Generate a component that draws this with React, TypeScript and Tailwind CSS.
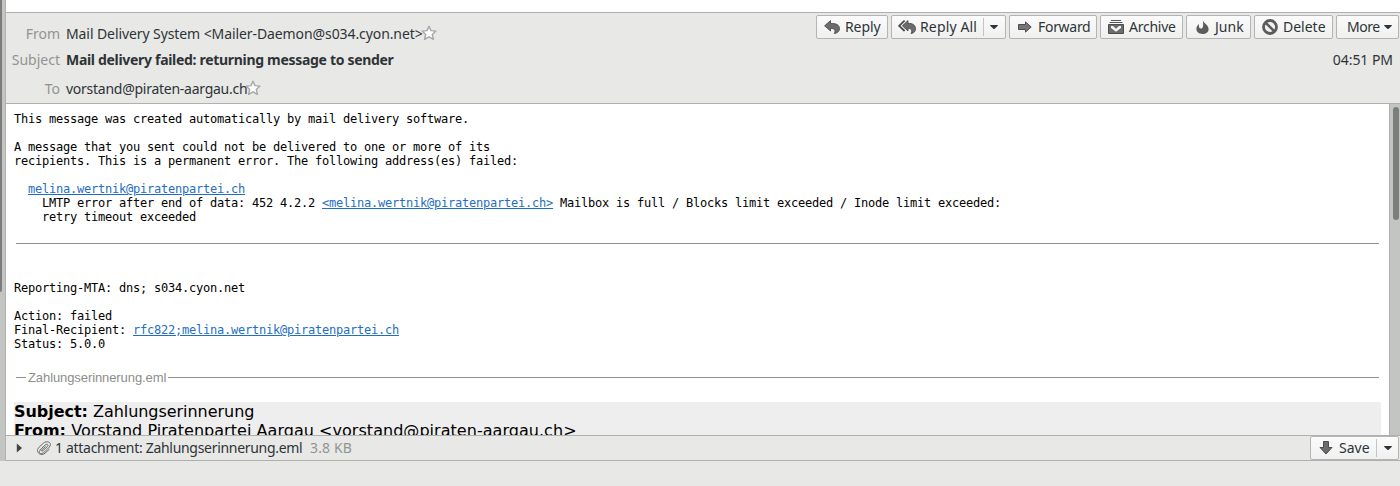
import type { ReactNode } from "react";

const ICON = "#5c5c5c";

function Star() {
  return (
    <svg width="16" height="16" viewBox="0 0 16 16" className="relative -top-px shrink-0">
      <path
        d="M8 1.2 L10 5.6 L14.9 6.1 L11.3 9.4 L12.4 14.4 L8 11.9 L3.6 14.4 L4.7 9.4 L1.1 6.1 L6 5.6 Z"
        fill="#fdfdfd"
        stroke="#a6a6a6"
        strokeWidth="1.4"
        strokeLinejoin="round"
      />
    </svg>
  );
}

function Caret() {
  return (
    <svg width="8" height="5" viewBox="0 0 8 5" className="shrink-0">
      <path d="M0.2 0 H7.8 V0.8 L4.4 4 H3.6 L0.2 0.8 Z" fill="#2e3436" />
    </svg>
  );
}

function ReplyIcon() {
  return (
    <svg width="16" height="16" viewBox="0 0 16 16" className="shrink-0">
      <path
        d="M0.6 6.8 L6.5 1.6 V4.5 C12 4.1 15.5 6.1 15.5 9.6 C15.5 12.3 13.3 14.2 10.2 14.5 C11.8 12.4 11.2 9.2 6.5 9.3 V12 Z"
        fill="#6c6c6c"
        stroke="#4c4c4c"
        strokeWidth="0.9"
      />
    </svg>
  );
}

function ReplyAllIcon() {
  return (
    <svg width="18" height="16" viewBox="0 0 18 16" className="shrink-0">
      <path d="M6.6 1.6 L1.2 6.8 L6.6 12" fill="none" stroke="#4c4c4c" strokeWidth="1.8" />
      <path
        d="M4.4 6.8 L10 1.6 V4.5 C14.5 4.1 17.5 6.1 17.5 9.6 C17.5 12.3 16 14.2 13 14.5 C14.4 12.4 14 9.2 10 9.3 V12 Z"
        fill="#6c6c6c"
        stroke="#4c4c4c"
        strokeWidth="0.9"
      />
    </svg>
  );
}

function ForwardIcon() {
  return (
    <svg width="14" height="12" viewBox="0 0 14 12" className="shrink-0">
      <path d="M0.5 3.5 H7.5 V0.9 L13.2 6 L7.5 11.1 V8.5 H0.5 Z" fill="#757575" stroke="#4c4c4c" strokeWidth="1" />
    </svg>
  );
}

function ArchiveIcon() {
  return (
    <svg width="16" height="16" viewBox="0 0 16 16" className="shrink-0">
      <path d="M3 1.5 H13 M1.5 3.5 H14.5" stroke="#555555" strokeWidth="1" />
      <path d="M0.5 5.5 H15.5 V14.5 H0.5 Z" fill="#6c6c6c" stroke="#4c4c4c" />
      <path d="M3 7 H5 L8 9.8 L11 7 H13 V9 L8 12.8 L3 9 Z" fill="#f3f3f3" />
    </svg>
  );
}

function JunkIcon() {
  return (
    <svg width="13" height="16" viewBox="0 0 13 16" className="shrink-0">
      <path
        d="M6.8 1 C7 4 12.6 5.8 12.6 10 C12.6 13.2 10 15 6.5 15 C3 15 0.4 13 0.4 9.8 C0.4 7.8 1.4 6.3 3 5 C2.7 7 2.9 9.2 4.6 9.6 C7.6 10 7.4 5.5 6.8 1 Z"
        fill={ICON}
      />
    </svg>
  );
}

function DeleteIcon() {
  return (
    <svg width="16" height="16" viewBox="0 0 16 16" className="shrink-0">
      <circle cx="8" cy="8" r="6.5" fill="#f1f1f1" stroke={ICON} strokeWidth="2.8" />
      <path d="M3.8 3.8 L12.2 12.2" stroke={ICON} strokeWidth="2.6" />
    </svg>
  );
}

function SaveIcon() {
  return (
    <svg width="14" height="14" viewBox="0 0 14 14" className="shrink-0">
      <path d="M4.5 0.5 H9.5 V6.5 H13 L7 13 L1 6.5 H4.5 Z" fill="#6c6c6c" stroke="#4c4c4c" />
    </svg>
  );
}

function ClipIcon() {
  return (
    <svg width="14" height="14" viewBox="0 0 14 14" className="shrink-0">
      <g fill="none" stroke="#686868" strokeWidth="1">
        <path d="M2 12.2 C-0.4 11 0.4 7.8 2.2 6 L6.6 2 C9.4 -0.4 14.6 0.8 13.2 4.6 C12.6 6.4 9 9.4 6.8 11.4 C4.6 13.4 2.2 12.8 2.4 10.6 C2.6 8.8 6.2 5.8 8 4.2 C10.2 2.2 12 3.8 10.4 5.6 L6 9.6 C4.8 10.6 4 9.8 4.8 8.8 L8.6 5.4" />
        <path d="M2 12.6 C3.6 14 6.2 13.8 8 12.2 L12.4 8.2" />
      </g>
    </svg>
  );
}

function Button({ className, children }: { className: string; children: ReactNode }) {
  return (
    <button
      className={
        "flex h-6 shrink-0 items-center whitespace-nowrap rounded-[2px] border border-[#b4b5b3] bg-linear-to-b from-[#fbfbfb] to-[#f0f0f0] text-left text-[#2e3436] " +
        className
      }
    >
      {children}
    </button>
  );
}

function Separator() {
  return <span className="h-[18px] w-px shrink-0 bg-[#c4c4c4]" />;
}

export default function App() {
  return (
    <div className="flex h-[486px] w-[1400px] flex-col overflow-hidden bg-[#e8e8e6] font-['Noto_Sans',sans-serif] text-[14px] leading-[20px] text-[#2e3436]">
      <div className="flex h-[461px] shrink-0">
        <div className="w-[6px] shrink-0 border-r border-[#b2b3b1] bg-[#c3c5c3]">
          <div className="h-[292px] w-[2px] rounded-br-[2px] bg-[#7b7c7b]" />
        </div>
        <div className="flex min-w-0 flex-1 flex-col border-b border-[#b0b1af]">
          <div className="h-3 shrink-0 bg-white" />
          <header className="flex h-[92px] shrink-0 justify-between border-y border-[#b0b1af] whitespace-nowrap">
            <div className="grid grid-cols-[54px_auto] grid-rows-[26px_26px_32px] gap-x-[6px] pt-[8px]">
              <span className="self-center text-right text-[#929492]">From</span>
              <span className="flex items-center">
                <span className="w-[355px] tracking-[-0.09px]">Mail Delivery System &lt;Mailer-Daemon@s034.cyon.net&gt;</span>
                <Star />
              </span>
              <span className="self-center text-right text-[#929492]">Subject</span>
              <span className="self-center font-bold tracking-[-0.31px]">Mail delivery failed: returning message to sender</span>
              <span className="self-center text-right text-[#929492]">To</span>
              <span className="flex items-center">
                <span className="w-[179px] tracking-[-0.26px]">vorstand@piraten-aargau.ch</span>
                <Star />
              </span>
            </div>
            <div className="flex flex-col items-end pr-px pt-[2px]">
              <div className="flex gap-[3px]">
                <Button className="w-[72px] gap-[5px] pl-[7px] tracking-[-0.1px]"><ReplyIcon />Reply</Button>
                <Button className="w-[115px] pl-[6px] tracking-[0.15px]">
                  <ReplyAllIcon />
                  <span className="ml-[4px] w-[63px]">Reply All</span>
                  <Separator />
                  <span className="ml-[6px]"><Caret /></span>
                </Button>
                <Button className="w-[88px] gap-[6px] pl-[8px] tracking-[-0.3px]"><ForwardIcon />Forward</Button>
                <Button className="w-[83px] gap-[5px] pl-[7px] tracking-[-0.25px]"><ArchiveIcon />Archive</Button>
                <Button className="w-[65px] gap-[6px] pl-[9px] tracking-[0px]"><JunkIcon />Junk</Button>
                <Button className="w-[79px] gap-[5px] pl-[7px] tracking-[0px]"><DeleteIcon />Delete</Button>
                <Button className="w-[63px] pl-[10px] tracking-[-0.5px]">
                  <span className="w-[37px]">More</span>
                  <Caret />
                </Button>
              </div>
              <span className="mt-[11px] pr-[6px] tracking-[-0.05px]">04:51 PM</span>
            </div>
          </header>
          <div className="flex h-[331px] shrink-0 overflow-hidden bg-white">
            <div className="flex min-w-0 flex-1 flex-col pl-2 pr-[8px] pt-[8px] text-black">
              <pre className="h-[112px] shrink-0 font-['DejaVu_Sans_Mono',monospace] text-[12px] leading-[14px] tracking-[-0.224px]">
                {"This message was created automatically by mail delivery software.\n\nA message that you sent could not be delivered to one or more of its\nrecipients. This is a permanent error. The following address(es) failed:\n\n  "}
                <a className="text-[#1f6fbf] underline">melina.wertnik@piratenpartei.ch</a>
                {"\n    LMTP error after end of data: 452 4.2.2 "}
                <a className="text-[#1f6fbf] underline">&lt;melina.wertnik@piratenpartei.ch&gt;</a>
                {" Mailbox is full / Blocks limit exceeded / Inode limit exceeded:\n    retry timeout exceeded"}
              </pre>
              <div className="ml-[2px] mr-[2px] mt-[19px] h-px shrink-0 bg-[#8f8f8f]" />
              <pre className="mt-[37px] h-[70px] shrink-0 font-['DejaVu_Sans_Mono',monospace] text-[12px] leading-[14px] tracking-[-0.224px]">
                {"Reporting-MTA: dns; s034.cyon.net\n\nAction: failed\nFinal-Recipient: "}
                <a className="text-[#1f6fbf] underline">rfc822;melina.wertnik@piratenpartei.ch</a>
                {"\nStatus: 5.0.0"}
              </pre>
              <div className="ml-[2px] mr-[2px] mt-[18px] flex h-4 shrink-0 items-center">
                <span className="h-px w-[10px] bg-[#8f8f8f]" />
                <span className="w-[142px] pl-[2px] pt-[2px] font-['Liberation_Sans',sans-serif] text-[13px] leading-4 tracking-[-0.09px] text-[#8b8e8b]">Zahlungserinnerung.eml</span>
                <span className="h-px flex-1 bg-[#8f8f8f]" />
              </div>
              <div className="mt-[17px] h-[60px] shrink-0 bg-[#eeeeee] font-['DejaVu_Sans',sans-serif] text-[16px] leading-[19px]">
                <div className="tracking-[-0.04px]"><b>Subject:</b> Zahlungserinnerung</div>
                <div className="tracking-[0.04px]"><b>From:</b> Vorstand Piratenpartei Aargau &lt;vorstand@piraten-aargau.ch&gt;</div>
              </div>
            </div>
            <div className="w-[11px] shrink-0 border-l border-[#b0b1af] bg-[#c3c5c3] pl-[3px] pt-[3px]">
              <div className="h-[113px] w-[6px] rounded-full bg-[#7b7e7b]" />
            </div>
          </div>
          <footer className="flex h-[25px] shrink-0 items-center border-t border-[#b0b1af] pl-[10px] pr-px whitespace-nowrap">
            <svg width="6" height="10" viewBox="0 0 6 10"><path d="M0.8 0.5 L6 5 L0.8 9.5 Z" fill="#3e4244" /></svg>
            <span className="ml-[15px]"><ClipIcon /></span>
            <span className="ml-[4px] w-[255px] tracking-[-0.3px]">1 attachment: Zahlungserinnerung.eml</span>
            <span className="tracking-[0.15px] text-[#929492]">3.8 KB</span>
            <div className="ml-auto">
              <Button className="w-[89px] pl-[8px] tracking-[0px]">
                <SaveIcon />
                <span className="ml-[6px] w-[37px]">Save</span>
                <Separator />
                <span className="ml-[7px]"><Caret /></span>
              </Button>
            </div>
          </footer>
        </div>
      </div>
    </div>
  );
}
